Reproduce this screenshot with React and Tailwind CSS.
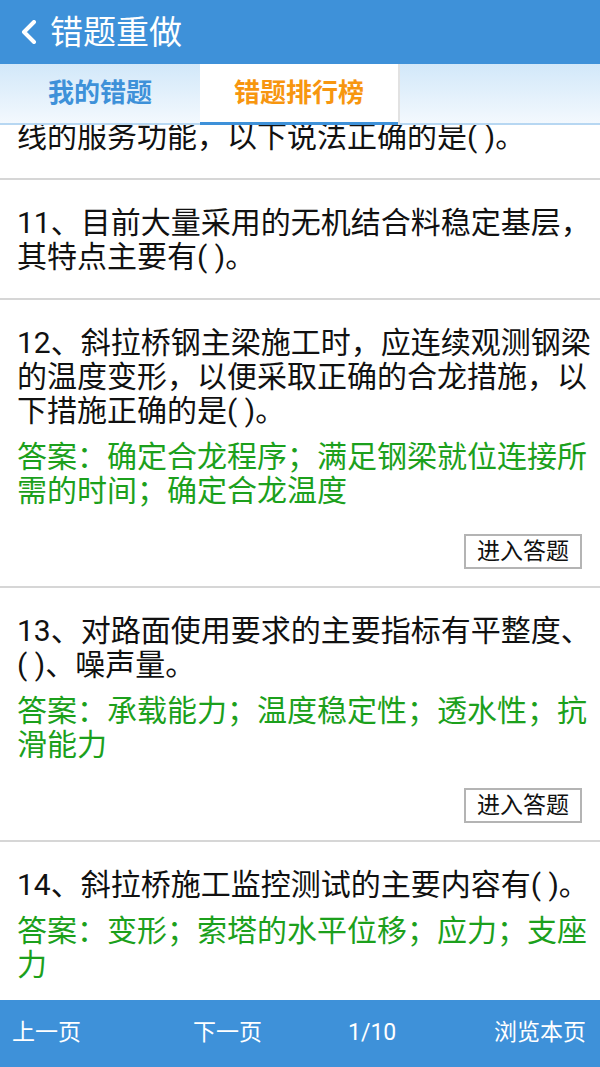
import React from 'react';

const questions = [
  {
    id: 11,
    lines: '11、目前大量采用的无机结合料稳定基层，其特点主要有( )。',
  },
  {
    id: 12,
    lines: '12、斜拉桥钢主梁施工时，应连续观测钢梁的温度变形，以便采取正确的合龙措施，以下措施正确的是( )。',
    answer: '答案：确定合龙程序；满足钢梁就位连接所需的时间；确定合龙温度',
    button: true,
  },
  {
    id: 13,
    lines: '13、对路面使用要求的主要指标有平整度、( )、噪声量。',
    answer: '答案：承载能力；温度稳定性；透水性；抗滑能力',
    button: true,
  },
  {
    id: 14,
    lines: '14、斜拉桥施工监控测试的主要内容有( )。',
    answer: '答案：变形；索塔的水平位移；应力；支座力',
  },
];

const QuestionItem = ({ q }) => (
  <div className="flex flex-col pl-[17px] pr-[7px] pt-[26px] pb-[24px] border-b-2 border-[#d6d6d6]">
    <p className="text-[30px] leading-[34px] text-[#111]">{q.lines}</p>
    {q.answer && (
      <p className="mt-[12px] text-[30px] leading-[34px] text-[#1ca01c]">{q.answer}</p>
    )}
    {q.button && (
      <button className="self-end mt-[26px] -mb-[7px] mr-[11px] w-[118px] h-[35px] border-2 border-[#b4b4b4] bg-white text-[23px] leading-none text-[#111]">
        进入答题
      </button>
    )}
  </div>
);

const App = () => {
  return (
    <div className="h-[1067px] w-[600px] flex flex-col bg-white overflow-hidden font-['Roboto','Noto_Sans_CJK_SC',sans-serif]">
      {/* Header */}
      <div className="h-[64px] shrink-0 bg-[#3e91d9] flex items-center pl-[20px]">
        <svg width="17" height="24" viewBox="0 0 17 24" className="mr-[13px]">
          <polyline points="14,2 4,12 14,22" fill="none" stroke="white" strokeWidth="4" strokeLinecap="round" strokeLinejoin="round" />
        </svg>
        <span className="text-white text-[33px] leading-none">错题重做</span>
      </div>

      {/* Tabs */}
      <div className="h-[61px] shrink-0 flex bg-gradient-to-b from-[#d2e8f9] to-[#f4f9fe]">
        <div className="w-[200px] flex flex-col">
          <div className="flex-1 flex items-center justify-center text-[26px] font-bold text-[#3e91d9]">我的错题</div>
          <div className="h-[2px] mt-[1px] bg-[#b7d7f2]" />
        </div>
        <div className="w-[200px] flex flex-col bg-white border-r-2 border-[#e2e2e2]">
          <div className="flex-1 flex items-center justify-center text-[26px] font-bold text-[#f7960f]">错题排行榜</div>
          <div className="h-[3px] bg-[#3e91d9]" />
        </div>
        <div className="flex-1 flex flex-col">
          <div className="flex-1" />
          <div className="h-[2px] mt-[1px] bg-[#b7d7f2]" />
        </div>
      </div>

      {/* List (scrolled: first item is partly under the tabs) */}
      <div className="flex-1 overflow-hidden">
        <div className="-mt-[5px] pl-[17px] pr-[7px] pb-[24px] border-b-2 border-[#d6d6d6]">
          <p className="text-[30px] leading-[34px] text-[#111]">线的服务功能，以下说法正确的是( )。</p>
        </div>
        {questions.map((q) => (
          <QuestionItem key={q.id} q={q} />
        ))}
      </div>

      {/* Bottom bar */}
      <div className="h-[67px] shrink-0 bg-[#3e91d9] grid grid-cols-[181px_155px_1fr_auto] items-center pl-[12px] pr-[14px] text-white text-[23px]">
        <span>上一页</span>
        <span>下一页</span>
        <span>1/10</span>
        <span>浏览本页</span>
      </div>
    </div>
  );
};

export default App;
